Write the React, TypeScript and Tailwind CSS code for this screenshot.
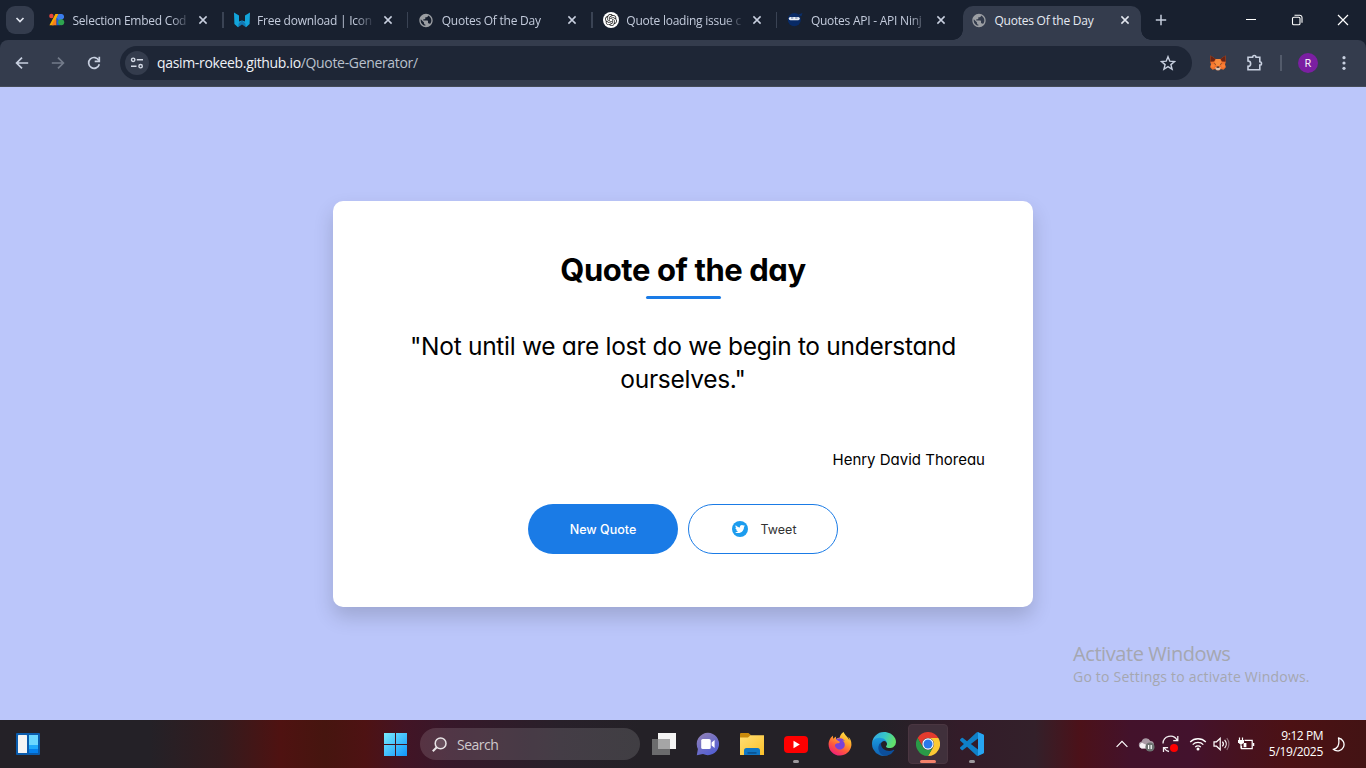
import type { ReactNode } from "react";
import { MdPublic } from "react-icons/md";
import { SiOpenai } from "react-icons/si";
import { FaTwitter, FaFirefoxBrowser } from "react-icons/fa";

const UI = "font-['Open_Sans','Noto_Sans',sans-serif]";
const BODY = "font-['Inter',sans-serif] [font-feature-settings:'cv11']";

/* ---------- favicons ---------- */

const SelectionIcon = () => (
  <svg width="16" height="16" viewBox="0 0 16 16">
    <circle cx="2.4" cy="4" r="2.2" fill="#e8453c" />
    <path d="M6.4 2h3.2L4.6 13.200H.400z" fill="#f9ab00" />
    <path d="M5.600 7.400h2v5.800H2.800z" fill="#f57c1f" />
    <path d="M9.400 2h3.200a2.800 2.800 0 0 1 1.400 5L9.600 9.600 7 7.200z" fill="#3b7ded" />
    <path d="m7.600 5.600 3.600 4v3.600H7.600z" fill="#1a62d6" />
    <circle cx="12.200" cy="10.200" r="3" fill="#2ea44f" />
  </svg>
);

const WingIcon = () => (
  <svg width="16" height="16" viewBox="0 0 16 16">
    <path d="M0 .4 5 3.4v6.200L8 8.400 7 12l-3 3.2L.4 12z" fill="#12a5dc" />
    <path d="M16 .4 11 3.4v6.200L8 8.400 9 12l3 3.2L15.600 12z" fill="#12a5dc" />
    <path d="M8 8.600 11.200 11.200 12 15.200 8 12.600 4 15.200 4.800 11.200z" fill="#1478b4" />
  </svg>
);

const GlobeIcon = () => <MdPublic size={17} color="#9b9ea3" />;

const OpenAiIcon = () => (
  <span className="flex size-4 items-center justify-center rounded-full bg-white">
    <SiOpenai size={12} color="#222" />
  </span>
);

const NinjaIcon = () => (
  <svg width="16" height="16" viewBox="0 0 16 16">
    <path d="m11.500 2.500 4-1.500-1.300 3.500z" fill="#0a2f6c" />
    <circle cx="7.300" cy="7.600" r="6.600" fill="#082a66" />
    <rect x="1.800" y="5" width="11" height="3.200" rx="1.600" fill="#e8edf5" />
    <path d="M4 6h2.300M8.200 6h2.300" stroke="#3d5687" strokeWidth=".8" />
  </svg>
);

/* ---------- browser chrome ---------- */

const Cross = ({ color }: { color: string }) => (
  <svg width="10" height="10" viewBox="0 0 10 10">
    <path d="m1.400 1.400 7.200 7.200M8.600 1.400 1.400 8.600" stroke={color} strokeWidth="1.500" />
  </svg>
);

type TabInfo = { title: string; icon: ReactNode; sep?: boolean };

const tabs: TabInfo[] = [
  { title: "Selection Embed Cod", icon: <SelectionIcon />, sep: true },
  { title: "Free download | Icon", icon: <WingIcon />, sep: true },
  { title: "Quotes Of the Day", icon: <GlobeIcon />, sep: true },
  { title: "Quote loading issue c", icon: <OpenAiIcon />, sep: true },
  { title: "Quotes API - API Ninj", icon: <NinjaIcon /> },
];

const Tab = ({ title, icon, sep }: TabInfo) => (
  <div className="flex h-7 w-[184.6px] shrink-0 items-center pl-[9px]">
    <span className="flex w-4 justify-center">{icon}</span>
    <span className="ml-[7.500px] w-[116px] whitespace-nowrap pt-px text-[12px] tracking-[-0.240px] text-[#c3cbdc] [mask-image:linear-gradient(to_right,#000_98px,transparent_118px)]">
      {title}
    </span>
    <span className="ml-[9.500px]">
      <Cross color="#c8cfdf" />
    </span>
    <span className={sep ? "ml-[14px] h-4 w-[1.500px] bg-[#3a4354]" : "hidden"} />
  </div>
);

const ActiveTab = () => (
  <div className="relative flex h-[34px] w-[178px] shrink-0 items-center self-end rounded-t-[10px] bg-[#343c4d] pb-[6px] pl-[8px]">
    <span className="absolute -left-[10px] bottom-0 size-[10px] bg-[radial-gradient(circle_at_0_0,transparent_9.500px,#343c4d_10px)]" />
    <span className="absolute -right-[10px] bottom-0 size-[10px] bg-[radial-gradient(circle_at_100%_0,transparent_9.500px,#343c4d_10px)]" />
    <span className="flex w-4 justify-center">
      <GlobeIcon />
    </span>
    <span className="ml-[7.500px] w-[117px] whitespace-nowrap pt-px text-[12px] tracking-[-0.240px] text-[#e6eaf2]">Quotes Of the Day</span>
    <span className="ml-[8.500px]">
      <Cross color="#e3e7ef" />
    </span>
  </div>
);

const TabStrip = () => (
  <div className="flex h-10 items-center bg-[#18202f]">
    <div className="ml-[6px] flex size-7 items-center justify-center rounded-[9px] bg-[#343c4d]">
      <svg width="10" height="8" viewBox="0 0 10 8">
        <path d="m1.500 2 3.500 3.500L8.500 2" fill="none" stroke="#dfe4ee" strokeWidth="1.700" />
      </svg>
    </div>
    <div className="ml-[6px] flex h-10 items-center">
      {tabs.map((t, i) => (
        <Tab key={i} {...t} />
      ))}
      <ActiveTab />
    </div>
    <svg className="ml-[14px]" width="12" height="12" viewBox="0 0 12 12">
      <path d="M6 .800v10.400M.800 6h10.400" stroke="#c3cbdc" strokeWidth="1.500" />
    </svg>
    <svg className="ml-auto" width="12" height="12" viewBox="0 0 12 12">
      <path d="M1 5.500h10" stroke="#fff" strokeWidth="1" />
    </svg>
    <svg className="ml-[34px]" width="12" height="12" viewBox="0 0 12 12" fill="none" stroke="#fff" strokeWidth="1.100">
      <rect x="1.500" y="3.200" width="7.500" height="7.500" rx="1.300" />
      <path d="M3.500 1.300h5.200A2.300 2.300 0 0 1 11 3.600v5.200" />
    </svg>
    <svg className="ml-[34px] mr-[17px]" width="12" height="12" viewBox="0 0 12 12">
      <path d="m1 1 10 10M11 1 1 11" stroke="#fff" strokeWidth="1.200" />
    </svg>
  </div>
);

const FoxIcon = () => (
  <svg width="18" height="18" viewBox="0 0 18 18">
    <path d="M1.500 1.500 6.500 5h5l5-3.500.500 5.500-1 3.500.800 2.800-2.300 2.400-2.600-.700-1.400 1.200H7.500l-1.400-1.200-2.600.700-2.300-2.400.800-2.800L1 7z" fill="#f0702a" />
    <path d="M1.500 1.500 6.700 5 5 7.600 1.200 7.800zM16.500 1.500 11.300 5 13 7.600l3.800.200z" fill="#6b2414" />
    <path d="M6.800 5h4.400l1.400 5L9 12.500 5.400 10z" fill="#f98b3c" />
    <path d="M2 10.500 6 10l-.800 3.500-3.600-.200zM16 10.500 12 10l.800 3.500 3.600-.200z" fill="#fb7f35" />
    <path d="m4.800 9 2 .9-.4 1zM13.200 9l-2 .9.400 1z" fill="#4a2a20" />
    <path d="m6.300 13 1.200.5h3l1.200-.5-.6 2.300-1 .9H7.900l-1-.9z" fill="#d8c4b8" />
    <path d="M7.900 12.600h2.200l.3 1.200H7.600z" fill="#2d2326" />
  </svg>
);

const Toolbar = () => (
  <div className="bg-[#18202f]">
    <div className="flex h-[47px] items-center rounded-t-[8px] border-b border-[#444b58] bg-[#343c4d] pl-3 pr-3">
      <svg width="20" height="20" viewBox="0 0 20 20" fill="none" stroke="#c8d0e0" strokeWidth="1.700">
        <path d="M16.200 10H4.800M10 4.600 4.600 10l5.400 5.400" />
      </svg>
      <svg className="ml-4" width="20" height="20" viewBox="0 0 20 20" fill="none" stroke="#737b8a" strokeWidth="1.700">
        <path d="M3.800 10h11.400M10 4.600l5.400 5.400-5.400 5.400" />
      </svg>
      <svg className="ml-4" width="20" height="20" viewBox="0 0 20 20" fill="none" stroke="#c8d0e0" strokeWidth="1.700">
        <path d="M14.900 7.500A5.400 5.400 0 1 0 15.300 11.200" />
        <path d="M15.300 3.800v4.500h-4.600" />
      </svg>
      <div className="ml-4 flex h-[34px] w-[1072px] shrink-0 items-center rounded-full bg-[#1e2636] pl-[5px]">
        <span className="flex size-6 items-center justify-center rounded-full bg-[#343c4d]">
          <svg width="14" height="14" viewBox="0 0 14 14" fill="none" stroke="#d5dbe7" strokeWidth="1.400">
            <circle cx="3.200" cy="3.800" r="1.700" />
            <path d="M6.800 3.800H13M1 10.200h5.500" />
            <circle cx="10.600" cy="10.200" r="1.700" />
          </svg>
        </span>
        <span className="ml-2 whitespace-nowrap pb-px text-[14px] tracking-[-0.330px] text-[#b9c0cc]">
          <span className="text-[#eef1f6]">qasim-rokeeb.github.io</span>/Quote-Generator/
        </span>
        <svg className="ml-auto mr-[16px]" width="16" height="16" viewBox="0 0 16 16" fill="none" stroke="#c8d0e0" strokeWidth="1.400">
          <path d="m8 1.700 1.800 4.500 4.800.3-3.700 3.100 1.200 4.700L8 11.700l-4.100 2.600 1.200-4.700-3.700-3.100 4.800-.3z" />
        </svg>
      </div>
      <span className="ml-[17px]">
        <FoxIcon />
      </span>
      <svg className="ml-[19px]" width="18" height="18" viewBox="0 0 18 18" fill="none" stroke="#c8d0e0" strokeWidth="1.600">
        <path d="M2 3.200h4.600a1.700 1.700 0 0 1 3.400 0h3.800v4.500a1.700 1.700 0 0 1 0 3.400v4.700H2v-3.500a2.500 2.500 0 0 0 0-5.300z" />
      </svg>
      <span className="ml-4 h-4 w-[1.500px] bg-[#535b6b]" />
      <span className="ml-auto flex size-5 items-center justify-center rounded-full bg-[#7b1fa2] text-[11px] text-white">R</span>
      <svg className="ml-4" width="20" height="20" viewBox="0 0 20 20" fill="#c8d0e0">
        <circle cx="10" cy="4.700" r="1.600" />
        <circle cx="10" cy="10" r="1.600" />
        <circle cx="10" cy="15.300" r="1.600" />
      </svg>
    </div>
  </div>
);

/* ---------- page ---------- */

const QuoteCard = () => (
  <div className="h-[406px] w-[700px] rounded-[10px] bg-white px-12 pt-[49px] text-center text-black shadow-[0_10px_20px_rgba(0,0,0,0.160)]">
    <h1 className="h-10 text-[31px] font-bold leading-10 tracking-[-0.420px]">Quote of the day</h1>
    <div className="mx-auto mt-[6px] h-[3px] w-[75px] rounded-[3px] bg-[#1a7be6]" />
    <p className="mt-[31px] text-[24.500px] leading-[33px] tracking-[-0.300px]">
      "Not until we are lost do we begin to understand
      <br />
      ourselves."
    </p>
    <p className="mt-[54px] text-right text-[15px] leading-5">Henry David Thoreau</p>
    <div className="mt-[34px] flex justify-center gap-[10px]">
      <button className="h-[50px] w-[150px] rounded-full bg-[#1a7be6] pt-[2px] text-[12.500px] font-medium text-white">New Quote</button>
      <button className="flex h-[50px] w-[150px] items-center justify-center rounded-full border border-[#1a7be6] pl-[2px] text-[12.500px] text-[#333]">
        <span className="mr-[13px] flex size-4 items-center justify-center rounded-full bg-[#1c9cee]">
          <FaTwitter size={10} color="#fff" />
        </span>
        <span className="pt-[2px]">Tweet</span>
      </button>
    </div>
  </div>
);

/* ---------- taskbar ---------- */

const Slot = ({ children, active, running }: { children: ReactNode; active?: boolean; running?: boolean }) => (
  <div className="flex w-11 justify-center">
    <div
      className={
        "relative flex size-10 items-center justify-center rounded-[4px] " +
        (active ? "border border-[#4a3641] bg-[#40303b]" : "")
      }
    >
      {children}
      {running && <span className="absolute bottom-[1px] h-[3px] w-[6px] rounded-full bg-[#9d999d]" />}
      {active && <span className="absolute bottom-0 h-[3px] w-4 rounded-full bg-[#f4826b]" />}
    </div>
  </div>
);

const EdgeIcon = () => (
  <svg width="24" height="24" viewBox="0 0 256 256">
    <defs>
      <linearGradient id="e1" x1="0" y1="0" x2="0" y2="1">
        <stop offset="0" stopColor="#1b9de2" />
        <stop offset="1" stopColor="#0f62b4" />
      </linearGradient>
      <linearGradient id="e2" x1="0" y1="0" x2="1" y2=".3">
        <stop offset=".1" stopColor="#35a9e4" />
        <stop offset=".55" stopColor="#36c6c8" />
        <stop offset="1" stopColor="#62e06c" />
      </linearGradient>
    </defs>
    <path fill="#0c4f9c" d="M231 190.500c-3.400 1.800-6.900 3.400-10.500 4.700a101.600 101.600 0 0 1-35.900 6.500c-47.300 0-88.500-32.500-88.500-74.300a31.500 31.500 0 0 1 16.400-27.300c-42.800 1.800-53.800 46.400-53.800 72.500 0 74 68.100 81.400 82.800 81.400 7.900 0 19.800-2.300 27-4.600l1.300-.4a128.300 128.300 0 0 0 66.600-52.800 4 4 0 0 0-5.400-5.700z" />
    <path fill="url(#e1)" d="M105.700 241.400a79.200 79.200 0 0 1-22.700-21.300 80.700 80.700 0 0 1 29.500-120c3.200-1.500 8.500-4.100 15.600-4a32.400 32.400 0 0 1 25.700 13 31.900 31.900 0 0 1 6.300 18.700c0-.2 24.500-79.600-80-79.600-43.900 0-80 41.700-80 78.200a130.200 130.200 0 0 0 12.100 56 128 128 0 0 0 156.400 67 75.500 75.500 0 0 1-62.800-8z" />
    <path fill="url(#e2)" d="M152.300 148.900c-.9 1-3.400 2.500-3.400 5.600 0 2.600 1.700 5.200 4.800 7.300 14.300 10 41.400 8.600 41.500 8.600a59.600 59.600 0 0 0 30.300-8.300 61.400 61.400 0 0 0 30.400-52.900c.3-22.400-8-37.300-11.300-43.900C223.500 23.900 177.700 0 128 0A128 128 0 0 0 0 126.200c.5-36.500 36.800-66 80-66 3.500 0 23.500.3 42 10a72.600 72.600 0 0 1 30.900 29.300c6.100 10.600 7.200 24.100 7.200 29.500s-2.700 13.300-7.800 19.900z" />
  </svg>
);

const ChromeIcon = () => (
  <svg width="24" height="24" viewBox="0 0 24 24">
    <path d="M1.600 6a12 12 0 0 1 20.800 0H12a6 6 0 0 0-5.200 9z" fill="#e33b2e" />
    <path d="M22.400 6A12 12 0 0 1 12 24l5.200-9A6 6 0 0 0 12 6z" fill="#fcc934" />
    <path d="M12 24A12 12 0 0 1 1.600 6l5.200 9a6 6 0 0 0 10.400 0z" fill="#2a9a47" />
    <circle cx="12" cy="12" r="5.700" fill="#fff" />
    <circle cx="12" cy="12" r="4.500" fill="#2b78ea" />
  </svg>
);

const FirefoxIcon = () => (
  <svg width="24" height="24" viewBox="0 0 24 24">
    <defs>
      <linearGradient id="ff" x1=".8" y1="0" x2=".25" y2="1">
        <stop offset="0" stopColor="#ffe94a" />
        <stop offset=".35" stopColor="#ffa62b" />
        <stop offset=".65" stopColor="#ff5a3c" />
        <stop offset="1" stopColor="#f0197e" />
      </linearGradient>
    </defs>
    <circle cx="12" cy="12.500" r="7" fill="#7a42d8" />
    <FaFirefoxBrowser size={24} fill="url(#ff)" />
  </svg>
);

const VsCodeIcon = () => (
  <svg width="24" height="24" viewBox="0 0 24 24">
    <path
      fill="#0f80c8"
      d="M23.150 2.587L18.210.210a1.494 1.494 0 0 0-1.705.290l-9.460 8.630-4.120-3.128a.999.999 0 0 0-1.276.057L.327 7.261A1 1 0 0 0 .326 8.740L3.899 12 .326 15.260a1 1 0 0 0 .001 1.479L1.650 17.940a.999.999 0 0 0 1.276.057l4.120-3.128 9.460 8.630a1.492 1.492 0 0 0 1.704.290l4.942-2.377A1.500 1.500 0 0 0 24 20.060V3.939a1.500 1.500 0 0 0-.850-1.352zm-5.146 14.861L10.826 12l7.178-5.448v10.896z"
    />
    <path fill="#27a5f2" d="M18 .200 23.200 2.600a1.500 1.500 0 0 1 .800 1.400v16a1.500 1.500 0 0 1-.850 1.400L18 23.800z" />
  </svg>
);

const Taskbar = () => (
  <div className="flex h-12 items-center bg-[linear-gradient(90deg,#242127_0px,#242127_150px,#331b1e_220px,#4f1211_280px,#46150f_325px,#4e1213_365px,#421425_405px,#37182a_450px,#28202a_560px,#242127_640px,#242127_880px,#331c29_960px,#33202a_1035px,#4c1119_1080px,#43122b_1130px,#43122d_1190px,#47121f_1240px,#4c1114_1290px,#431314_1366px)]">
    <svg className="ml-4" width="24" height="22" viewBox="0 0 24 22">
      <rect width="24" height="22" rx="1" fill="#0a5cad" />
      <rect x="2" y="2" width="9" height="18" rx=".5" fill="#f4f4f4" />
      <rect x="13" y="2" width="9" height="10" fill="#6bd7ff" />
      <rect x="13" y="12" width="9" height="4" fill="#1fa9fb" />
      <rect x="13" y="16" width="9" height="4" fill="#0480ee" />
    </svg>
    <div className="ml-[333px] flex items-center">
      <Slot>
        <svg width="23" height="23" viewBox="0 0 23 23">
          <defs>
            <linearGradient id="win" gradientUnits="userSpaceOnUse" x1="0" y1="0" x2="23" y2="23">
              <stop offset="0" stopColor="#78ecff" />
              <stop offset="1" stopColor="#0f94fb" />
            </linearGradient>
          </defs>
          <path fill="url(#win)" d="M0 0h11v11H0zM12 0h11v11H12zM0 12h11v11H0zM12 12h11v11H12z" />
        </svg>
      </Slot>
      <div className="ml-[3px] mr-[2px] flex h-8 w-[220px] items-center rounded-full bg-white/[0.130] pl-3">
        <svg width="15" height="15" viewBox="0 0 15 15" fill="none" stroke="#e8e4e6">
          <circle cx="8.600" cy="6.400" r="5.400" strokeWidth="1.500" fill="#ffffff22" />
          <path d="m4.800 10.200-4 4" strokeWidth="2" />
        </svg>
        <span className="ml-[10px] text-[14px] tracking-[-0.500px] text-[#cfcacd]">Search</span>
      </div>
      <Slot>
        <svg width="24" height="22" viewBox="0 0 24 22">
          <rect x="6" width="18" height="16" fill="#f4f4f4" />
          <rect y="6" width="18" height="16" fill="#6b6b6d" />
          <rect x="6" y="6" width="12" height="10" fill="#a5a5a6" />
        </svg>
      </Slot>
      <Slot>
        <svg width="24" height="24" viewBox="0 0 24 24">
          <defs>
            <linearGradient id="chat" x1="0" y1="0" x2=".6" y2="1">
              <stop offset="0" stopColor="#9583b5" />
              <stop offset="1" stopColor="#5560d2" />
            </linearGradient>
          </defs>
          <path d="M12 .800a11.200 11.200 0 1 1-5 21.300L.800 23.200 1.900 17A11.200 11.200 0 0 1 12 .800z" fill="url(#chat)" />
          <rect x="5.200" y="7" width="9.500" height="10" rx="1.500" fill="#fff" />
          <path d="m15.600 10.500 3-2.500v8l-3-2.500z" fill="#fff" />
        </svg>
      </Slot>
      <Slot>
        <svg width="24" height="22" viewBox="0 0 24 22">
          <defs>
            <linearGradient id="fold" x1="0" y1="0" x2="1" y2="1">
              <stop offset="0" stopColor="#ffdf75" />
              <stop offset="1" stopColor="#fbc02a" />
            </linearGradient>
          </defs>
          <path d="M0 1a1 1 0 0 1 1-1h7.500L11 2.200 9 5H0z" fill="#c98a0c" />
          <path d="M0 4.500h8l2.500-2.300H24V22H0z" fill="url(#fold)" />
          <path d="M4 22v-4.500a2.500 2.500 0 0 1 2.500-2.500h11a2.500 2.500 0 0 1 2.500 2.500V22z" fill="#0f76c4" />
          <path d="M7.500 19h9v1.800h-9z" fill="#0a5595" />
        </svg>
      </Slot>
      <Slot running>
        <svg width="24" height="17" viewBox="0 0 24 17">
          <rect width="24" height="17" rx="4" fill="#fe0000" />
          <path d="m9.500 4.700 6.300 3.800-6.300 3.800z" fill="#fff" />
        </svg>
      </Slot>
      <Slot>
        <FirefoxIcon />
      </Slot>
      <Slot>
        <EdgeIcon />
      </Slot>
      <Slot active>
        <ChromeIcon />
      </Slot>
      <Slot running>
        <VsCodeIcon />
      </Slot>
    </div>
    <div className="ml-auto flex items-center pr-5">
      <svg width="12" height="8" viewBox="0 0 12 8" fill="none" stroke="#fff" strokeWidth="1.200">
        <path d="m.600 6.800 5.400-5.400 5.400 5.400" />
      </svg>
      <svg className="ml-[10px]" width="17" height="16" viewBox="0 0 17 16">
        <path d="M4 12.500a3.600 3.600 0 0 1-.300-7.100 4.600 4.600 0 0 1 8.600-.400 3.400 3.400 0 0 1 1 6.700z" fill="#a99aa5" />
        <path d="M3.500 12.500A3 3 0 0 1 4 6.800l5.500 2.700v3z" fill="#f5f1f4" />
        <circle cx="12" cy="11" r="4.600" fill="#6c7270" />
        <path d="M10.600 9v4M13.200 9v4" stroke="#fff" strokeWidth="1.200" />
      </svg>
      <svg className="ml-[7px]" width="18" height="18" viewBox="0 0 18 18" fill="none" stroke="#f3eef1" strokeWidth="1.300">
        <path d="M1 8.500a7.500 7.500 0 0 1 14-3.500M15.800 1v4.600h-4.600" />
        <path d="M7 16.500a7 7 0 0 1-4.800-3.500M1.500 17v-4.400h4.600" />
        <circle cx="12" cy="13" r="4" fill="#fe0000" stroke="none" />
      </svg>
      <svg className="ml-[9px]" width="18" height="14" viewBox="0 0 18 14" fill="none" stroke="#fff" strokeWidth="1.300">
        <path d="M1.200 5a11 11 0 0 1 15.600 0M3.700 7.600a7.400 7.400 0 0 1 10.600 0M6.200 10.100a4 4 0 0 1 5.600 0" />
        <circle cx="9" cy="12" r="1.500" fill="#fff" stroke="none" />
      </svg>
      <svg className="ml-[6px]" width="17" height="14" viewBox="0 0 17 14" fill="none" stroke="#fff" strokeWidth="1.200">
        <path d="M1 4.800h2.500l3.700-3.500v11.400L3.500 9.200H1z" />
        <path d="M9.400 4.700a3.500 3.500 0 0 1 0 4.600M11.600 2.800a6.300 6.300 0 0 1 0 8.400" />
        <path d="M13.800 1.200a9 9 0 0 1 0 11.600" stroke="#8d6b78" />
      </svg>
      <svg className="ml-[7px]" width="18" height="14" viewBox="0 0 18 14" fill="none" stroke="#fff" strokeWidth="1.200">
        <path d="M7.500 3.300h7.700v8.400H4.500V9" />
        <path d="M16.500 6v3" strokeWidth="1.500" />
        <path d="M2.500.500v2.500M5.500.500v2.500M4 7v4.500" />
        <path d="M1 3h6v2.200L5.300 7H2.700L1 5.200z" fill="#fff" stroke="none" />
        <path d="M6.600 6h2.800v4.200H6.600z" fill="#fff" stroke="none" />
      </svg>
      <div className="ml-[10px] w-[58px] text-right text-[12px] leading-4 text-white">
        <div className="tracking-[-0.450px]">9:12 PM</div>
        <div className="tracking-[-0.300px]">5/19/2025</div>
      </div>
      <svg className="ml-[9px]" width="14" height="15" viewBox="0 0 14 15" fill="none" stroke="#fff" strokeWidth="1.300">
        <path d="M6.500 1a6.500 6.500 0 1 1-5.300 11.300C5 12 8 8.500 6.500 1z" strokeLinejoin="round" />
      </svg>
    </div>
  </div>
);

export default function App() {
  return (
    <div className={"flex h-[768px] w-[1366px] flex-col overflow-hidden " + UI}>
      <TabStrip />
      <Toolbar />
      <main className="relative flex flex-1 items-start justify-center bg-[#bbc6fa] pt-[114px]">
        <div className={BODY}>
          <QuoteCard />
        </div>
        <div className="absolute left-[1073px] top-[553px] whitespace-nowrap text-[#a5a7b0]">
          <div className="text-[20px] leading-7 tracking-[-0.420px]">Activate Windows</div>
          <div className="text-[14px] leading-[18px] tracking-[0.210px]">Go to Settings to activate Windows.</div>
        </div>
      </main>
      <Taskbar />
    </div>
  );
}
